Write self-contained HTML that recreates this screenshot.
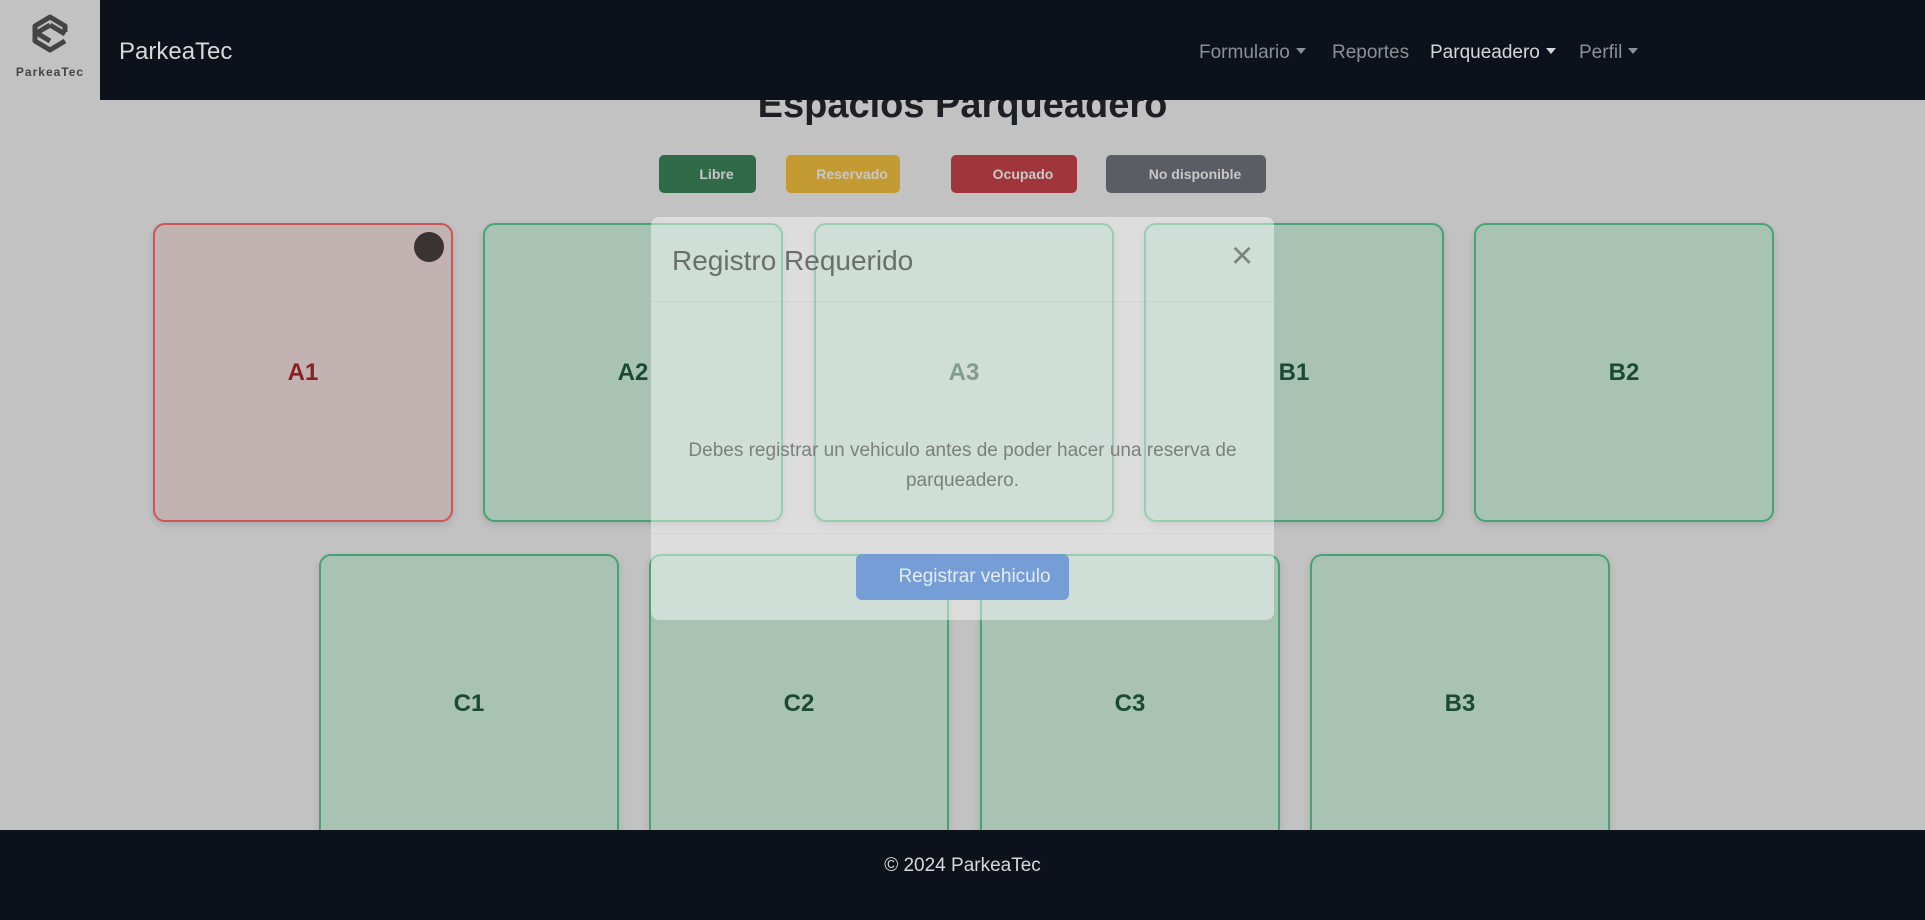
<!DOCTYPE html>
<html><head><meta charset="utf-8"><style>
*{box-sizing:border-box;margin:0;padding:0}
body{width:1925px;height:920px;overflow:hidden;background:#c2c2c2;font-family:"Liberation Sans",sans-serif;position:relative}
.nav{position:absolute;left:0;top:0;width:1925px;height:100px;background:#0d111c;z-index:5}
.logo{position:absolute;left:0;top:0;width:100px;height:100px;background:#c2c2c2}
.logo span{position:absolute;left:0;width:100px;top:65px;text-align:center;font-size:12px;font-weight:bold;color:#444;letter-spacing:1px}
.brand{position:absolute;left:119px;top:38px;font-size:24px;color:#d8d8d8}
.links a{position:absolute;top:42px;font-size:19px;color:#8a9096;text-decoration:none}
.car:after{content:"";display:inline-block;margin-left:6px;vertical-align:4px;border-left:5px solid transparent;border-right:5px solid transparent;border-top:6px solid currentColor}
h1{position:absolute;top:84px;left:0;width:1925px;text-align:center;font-size:38px;color:#1d1f24;font-weight:bold}
.lg{position:absolute;top:155px;height:38px;border-radius:5px;color:#c8c8c8;font-size:14px;font-weight:bold;text-align:center;line-height:38px;padding-left:18px}
.c{position:absolute;width:300px;height:299px;border:2px solid #46a472;border-radius:12px;background:#a8c3b4;color:#1a4a36;font-weight:bold;font-size:24px;display:flex;align-items:center;justify-content:center;box-shadow:0 3px 8px rgba(0,0,0,.12)}
.r1{top:223px}.r2{top:554px;height:300px}
.red{background:#c2b2b2;border-color:#cc5555;color:#8a2020}
.dot{position:absolute;right:7px;top:7px;width:30px;height:30px;border-radius:50%;background:#3a3333}
.modal{position:absolute;left:651px;top:217px;width:623px;height:403px;background:rgba(255,255,255,.45);border-radius:8px;z-index:3}
.mt{position:absolute;left:21px;top:28px;font-size:28px;color:#6a6f6c}
.mx{position:absolute;left:580px;top:18px;font-size:38px;color:#7b8580;font-weight:200}
.hl{position:absolute;left:0;right:0;height:1px;background:rgba(0,0,0,.04)}
.mb{position:absolute;left:0;right:0;top:219px;text-align:center;font-size:19px;line-height:30px;color:#7b807d}
.btn{position:absolute;left:205px;top:337px;width:213px;height:46px;background:#759ed6;border-radius:6px;color:#e4ecf4;font-size:19px;text-align:center;line-height:46px;padding-left:24px}
.foot{position:absolute;left:0;top:830px;width:1925px;height:90px;background:#0d111c;color:#d8d8d8;text-align:center;font-size:19px;line-height:72px;z-index:5}
</style></head><body>
<h1>Espacios Parqueadero</h1>
<div class="nav">
<div class="logo"><svg width="100" height="62" viewBox="0 0 100 62"><g fill="none" stroke="#444" stroke-width="5" stroke-linejoin="round"><path d="M50 25 L35 34 L35 41 L50 50 L65 41"/><path d="M50 25 L65 34"/><path d="M50 41 L35 32 L35 26 L50 17 L65 26 L65 32"/></g></svg><span>ParkeaTec</span></div>
<div class="brand">ParkeaTec</div>
<div class="links"><a style="left:1199px" class="car">Formulario</a><a style="left:1332px">Reportes</a><a style="left:1430px;color:#d4d6d8" class="car">Parqueadero</a><a style="left:1579px" class="car">Perfil</a></div>
</div>
<div class="lg" style="left:659px;width:97px;background:#2f6b47">Libre</div>
<div class="lg" style="left:786px;width:114px;background:#c49a33">Reservado</div>
<div class="lg" style="left:951px;width:126px;background:#a0353b">Ocupado</div>
<div class="lg" style="left:1106px;width:160px;background:#5a5d63">No disponible</div>
<div class="c r1 red" style="left:153px">A1<div class="dot"></div></div>
<div class="c r1" style="left:483px">A2</div>
<div class="c r1" style="left:814px">A3</div>
<div class="c r1" style="left:1144px">B1</div>
<div class="c r1" style="left:1474px">B2</div>
<div class="c r2" style="left:319px">C1</div>
<div class="c r2" style="left:649px">C2</div>
<div class="c r2" style="left:980px">C3</div>
<div class="c r2" style="left:1310px">B3</div>
<div class="modal">
<div class="mt">Registro Requerido</div><div class="mx">×</div>
<div class="hl" style="top:84px"></div>
<div class="mb">Debes registrar un vehiculo antes de poder hacer una reserva de<br>parqueadero.</div>
<div class="hl" style="top:316px"></div>
<div class="btn">Registrar vehiculo</div>
</div>
<div class="foot">© 2024 ParkeaTec</div>
</body></html>
